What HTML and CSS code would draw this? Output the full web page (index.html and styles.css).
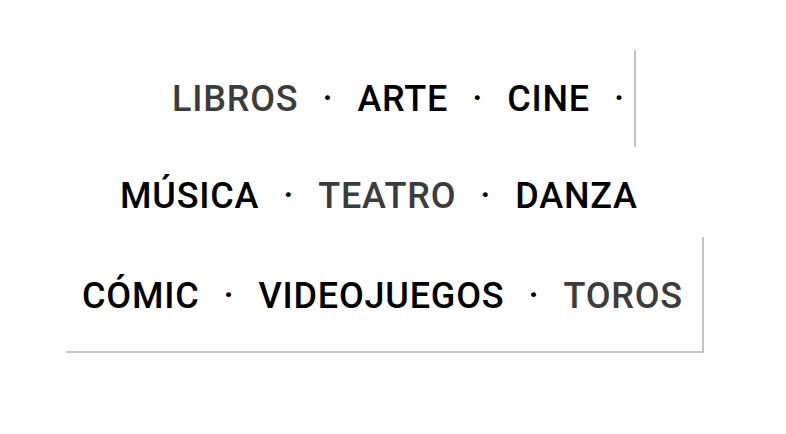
FILE: index.html
```html
<!DOCTYPE html>
<html lang="es">
<head>
    <meta charset="UTF-8">
    <meta name="viewport" content="width=device-width, initial-scale=1.0">
    <title>Secciones</title>
    <link rel="stylesheet" href="styles.css">
</head>
<body>
    <nav class="sections">
        <div class="row row-first">
            <a class="item muted" href="#">LIBROS</a>
            <span class="sep">·</span>
            <a class="item" href="#">ARTE</a>
            <span class="sep">·</span>
            <a class="item" href="#">CINE</a>
            <span class="sep">·</span>
        </div>
        <div class="row row-second">
            <a class="item" href="#">MÚSICA</a>
            <span class="sep">·</span>
            <a class="item muted" href="#">TEATRO</a>
            <span class="sep">·</span>
            <a class="item" href="#">DANZA</a>
        </div>
        <div class="row row-third">
            <a class="item" href="#">CÓMIC</a>
            <span class="sep">·</span>
            <a class="item" href="#">VIDEOJUEGOS</a>
            <span class="sep">·</span>
            <a class="item muted" href="#">TOROS</a>
        </div>
    </nav>
</body>
</html>
```

FILE: styles.css
```css
body {
    margin: 0;
    background: #fff;
    font-family: Roboto, "Liberation Sans", sans-serif;
}

.sections {
    display: flex;
    flex-direction: column;
    align-items: flex-start;
    padding-top: 50px;
}

.row {
    display: flex;
    align-items: center;
    gap: 24px;
    font-size: 36px;
    font-weight: 500;
    letter-spacing: 0.8px;
}

.item {
    color: #000;
    text-decoration: none;
}

.item.muted {
    color: #3c3c3c;
}

.sep {
    color: #000;
}

/* first line ends against a thin rule */
.row-first {
    height: 97px;
    margin-left: 172px;
    padding-right: 9px;
    border-right: 2px solid #c4c4c4;
}

.row-second {
    height: 90px;
    margin-left: 120px;
    padding-top: 8px;
    box-sizing: border-box;
}

.row-third {
    height: 116px;
    margin-left: 66px;
    padding: 4px 19px 0 16px;
    box-sizing: border-box;
    border-right: 2px solid #c4c4c4;
    border-bottom: 2px solid #c4c4c4;
}
```
